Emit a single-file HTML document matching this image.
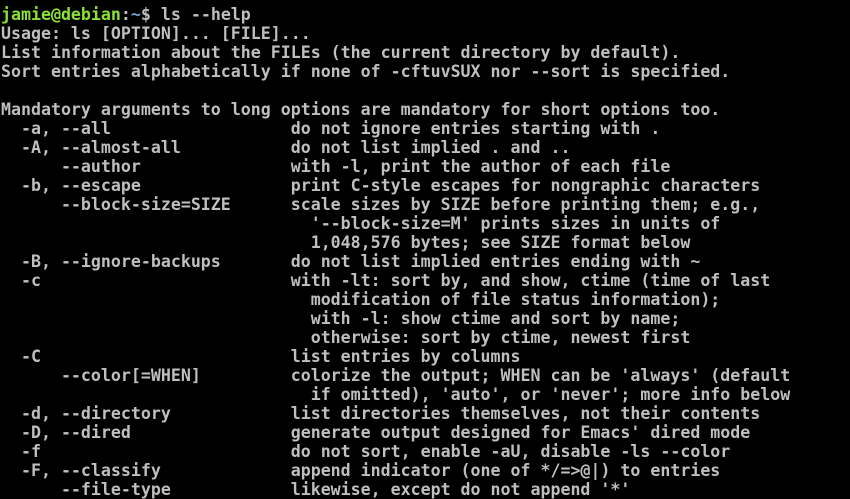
<!DOCTYPE html>
<html><head><style>
html,body{margin:0;padding:0;background:#000;width:850px;height:483px;overflow:hidden}
pre{margin:0;position:absolute;left:1px;top:-14px;font-family:"DejaVu Sans Mono","Liberation Mono",monospace;font-weight:bold;font-size:16.6px;line-height:19px;color:#bfbfbf}
.g{color:#8ae234}.b{color:#729fcf}
</style></head><body><pre>

<span class="g">jamie@debian</span>:<span class="b">~</span>$ ls --help
Usage: ls [OPTION]... [FILE]...
List information about the FILEs (the current directory by default).
Sort entries alphabetically if none of -cftuvSUX nor --sort is specified.

Mandatory arguments to long options are mandatory for short options too.
  -a, --all                  do not ignore entries starting with .
  -A, --almost-all           do not list implied . and ..
      --author               with -l, print the author of each file
  -b, --escape               print C-style escapes for nongraphic characters
      --block-size=SIZE      scale sizes by SIZE before printing them; e.g.,
                               '--block-size=M' prints sizes in units of
                               1,048,576 bytes; see SIZE format below
  -B, --ignore-backups       do not list implied entries ending with ~
  -c                         with -lt: sort by, and show, ctime (time of last
                               modification of file status information);
                               with -l: show ctime and sort by name;
                               otherwise: sort by ctime, newest first
  -C                         list entries by columns
      --color[=WHEN]         colorize the output; WHEN can be 'always' (default
                               if omitted), 'auto', or 'never'; more info below
  -d, --directory            list directories themselves, not their contents
  -D, --dired                generate output designed for Emacs' dired mode
  -f                         do not sort, enable -aU, disable -ls --color
  -F, --classify             append indicator (one of */=>@|) to entries
      --file-type            likewise, except do not append '*'
</pre></body></html>
